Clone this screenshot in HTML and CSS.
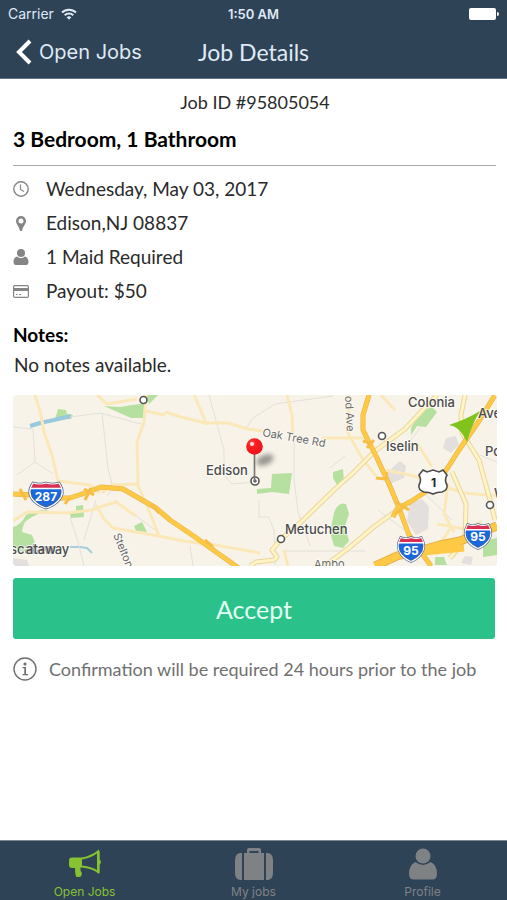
FILE: index.html
```html
<!DOCTYPE html>
<html lang="en">
<head>
<meta charset="utf-8">
<meta name="viewport" content="width=device-width, initial-scale=1">
<title>Job Details</title>
<link rel="stylesheet" href="styles.css">
</head>
<body>
<header class="top">
  <div class="status">
    <span class="carrier">Carrier
      <svg class="wifi" viewBox="0 0 16 12" aria-hidden="true"><g fill="none" stroke="currentColor" stroke-width="2"><path d="M1 4.500a10 10 0 0 1 14 0"/><path d="M3.700 7.300a6.200 6.200 0 0 1 8.600 0"/></g><path d="M5.700 9.300a3.300 3.300 0 0 1 4.600 0L8 11.800z" fill="currentColor"/></svg>
    </span>
    <span class="time">1:50 AM</span>
    <svg class="battery" viewBox="0 0 30 12" aria-hidden="true"><rect width="27" height="12" rx="2" fill="#fff"/><path d="M28 4q2 0 2 2t-2 2z" fill="#fff"/></svg>
  </div>
  <nav class="navbar">
    <a class="back" href="#"><svg viewBox="0 0 16 26" aria-hidden="true"><path d="M14 2 3 13l11 11" fill="none" stroke="currentColor" stroke-width="4"/></svg>Open Jobs</a>
    <h1>Job Details</h1>
  </nav>
</header>

<main class="content">
  <p class="job-id">Job ID #95805054</p>
  <h2 class="title">3 Bedroom, 1 Bathroom</h2>
  <ul class="facts">
    <li><svg viewBox="0 0 16 16" aria-hidden="true"><g fill="none" stroke="currentColor"><circle cx="8" cy="8" r="7.200" stroke-width="1.400"/><path d="M7.500 3.500V8.500L11 10.500" stroke-width="1.200"/></g></svg>Wednesday, May 03, 2017</li>
    <li><svg viewBox="0 0 16 16" aria-hidden="true"><path fill="currentColor" fill-rule="evenodd" d="M8 1a5 5 0 0 1 5 5c0 3-3 5-4 10H7C6 11 3 9 3 6a5 5 0 0 1 5-5zm0 2.500a2.500 2.500 0 1 0 0 5 2.500 2.500 0 0 0 0-5z"/></svg>Edison,NJ 08837</li>
    <li><svg viewBox="0 0 16 16" aria-hidden="true"><g fill="currentColor"><circle cx="8" cy="4" r="4"/><path d="M4 7.500q4 3.300 8 0 3.500 1 3.500 5.500 0 3-2.500 3H3q-2.500 0-2.500-3 0-4.500 3.500-5.500z"/></g></svg>1 Maid Required</li>
    <li><svg viewBox="0 0 16 16" aria-hidden="true"><rect x=".6" y="2.600" width="14.800" height="11.800" rx="1.200" fill="none" stroke="currentColor" stroke-width="1.200"/><path d="M1 5h14v3H1z" fill="currentColor"/><path d="M3 11.500h1.500M6 11.500h2" stroke="currentColor"/></svg>Payout: $50</li>
  </ul>
  <h3 class="notes-title">Notes:</h3>
  <p class="notes">No notes available.</p>

  <svg class="map" viewBox="13 395 484 171" role="img" aria-label="Map of Edison">
    <defs>
      <filter id="soft" x="-50%" y="-50%" width="200%" height="200%"><feGaussianBlur stdDeviation="2.500"/></filter>
      <clipPath id="shield-clip"><path d="M-13-12Q-6-10 0-12 6-10 13-12 20-2 12 6 7 11 0 13-7 11-12 6-20-2-13-12z"/></clipPath>
      <g id="shield">
        <path d="M-13-12Q-6-10 0-12 6-10 13-12 20-2 12 6 7 11 0 13-7 11-12 6-20-2-13-12z" fill="#1b68dc" stroke="#4a5f8a" stroke-width="2.600"/>
        <g clip-path="url(#shield-clip)"><path d="M-18-14h36v7h-36z" fill="#d92f50"/><path d="M-18-6.500h36" stroke="#fff" stroke-width="1.500"/></g>
        <path d="M-13-12Q-6-10 0-12 6-10 13-12 20-2 12 6 7 11 0 13-7 11-12 6-20-2-13-12z" fill="none" stroke="#fff" stroke-width="1.200"/>
      </g>
      <radialGradient id="ball" cx=".35" cy=".3" r=".8"><stop offset="0" stop-color="#ff5a50"/><stop offset=".3" stop-color="#fb1d20"/><stop offset="1" stop-color="#e9101a"/></radialGradient>
    </defs>
    <path fill="#f8f3e8" d="M13 395h484v171H13z"/>
    <g fill="#e3dfdc">
      <path d="M392 468l8-7 6 5-2 12-14 6-6-4zM410 503l12-4 7 8-1 22-12 6-9-14zM446 438l10-2 3 9-8 8-8-5zM13 558l14 2 2 6H13zM465 556l8 1-2 8-10-2z"/>
    </g>
    <g fill="#b5e0a0">
      <path d="M56 416l2-7 8 1 1 4 6 1-2 4-17 1zM104 406l16 1 25-4 1 15-15 0zM146 395h12l-9 9zM13 527q8-2 13-12 8-5 23-5-16 5-24 12-3 5-3 10l10 3q6 12 0 19l-10-2-9-5zM70 514l6-2 0-6 7-1 1 12-13 1zM134 526l8-4 5 10-11-1z"/>
      <path d="M257 489l14-1 1-14 20-1-3 21-17-2-15 2zM411 428l10-16 11-5 5 5-11 15-9-1-6 9zM333 472l10-3 1 13-7 3-4-7zM334 513q4-12 12-9l3 10-4 12 4 15-6 7-9-2-4-14zM435 557l9 0 3 8h-12zM483 541l14-3v17l-14 2z"/>
    </g>
    <path d="M30 426q12-4 24-6l17-4" fill="none" stroke="#98c9dc" stroke-width="4"/>
    <path d="M70 547h10l7 1 5 5" fill="none" stroke="#a3d0e0" stroke-width="2"/>
    <g fill="none" stroke="#e2e0da" stroke-width="1">
      <path d="M13 427l20 2 2 33-18 13M35 462l18 12M70 417l30-4 45 12M102 413l6 55 5 20M113 488l-6 8M70 517l8 25 6 24M96 500l-12 40M115 500l40 30"/>
      <path d="M209 395l15 55 0 25 8 9 22-2M245 430l8-12 22-14 58-8M294 440v40l4 32 12 34M259 500l0 17 10 0 5 14 1 34M190 546l3 20M285 551h80M420 428l-20 26M378 510l60 45M345 456l-15 12M424 493l28 27M480 455l17 7"/>
    </g>
    <g fill="none" stroke="#fbe8b8" stroke-width="3" stroke-linejoin="round">
      <path d="M35 395l6 20 3 17 8 23 6 26 32 4 10 8M97 395l10 9 30-5M146 395l-2 27-7 20 1 44 10 22 11 28M138 484l-26 1-10 8M165 415l-20-4M13 521l14-9 40 1 25-3 14-5 10-3 20 14M96 505l8 14 9 9 46 8 24 5 32 4 45 8"/>
      <path d="M165 412l16 5 24 6 23 0 20 6 15 2M322 438h44M194 395l13 30M287 395l5 20 1 20M284 550l4 16M349 395l-1 38 14 25 14 18M386 470l28 6 22 8 28 9 33 3M417 443l15 24M448 484l-4 30 10 18M395 410l-14-15M437 524l28 5 17-7M438 547l12-18"/>
    </g>
    <g fill="none" stroke-linejoin="round">
      <path d="M250 566l6-4 18-2 3-3-5-7 9-11 19-16 35-34 17-15 23-23 30-22 32-34M325 566l25-19 25-21 24-17M465 395l-4 20 1 18 17 27 11 40 5 20M452 472l14 32-1 37M450 558l12-14" stroke="#e8d5a0" stroke-width="5"/>
      <path d="M250 566l6-4 18-2 3-3-5-7 9-11 19-16 35-34 17-15 23-23 30-22 32-34M325 566l25-19 25-21 24-17M465 395l-4 20 1 18 17 27 11 40 5 20M452 472l14 32-1 37M450 558l12-14" stroke="#fff4c4" stroke-width="3"/>
      <path d="M13 494l20 1M60 498l10 0 18-6 13-5 22 2 33 19 14 12 25 17 45 32M369 395l-6 20v15l13 26 13 28 10 24 10 27 12 17 10 14M495 395l-16 26-20 29-14 22-15 17-20 13-13 7-4 8" stroke="#e5ad45" stroke-width="5"/>
      <path d="M375 566l22-10 28-7 15-4 20-4 37-15" stroke="#e5ad45" stroke-width="9"/>
      <path d="M13 494l20 1M60 498l10 0 18-6 13-5 22 2 33 19 14 12 25 17 45 32M369 395l-6 20v15l13 26 13 28 10 24 10 27 12 17 10 14M495 395l-16 26-20 29-14 22-15 17-20 13-13 7-4 8" stroke="#fec945" stroke-width="4"/>
      <path d="M375 566l22-10 28-7 15-4 20-4 37-15M424 552l40-4" stroke="#fec945" stroke-width="7"/>
      <path d="M20 489l6 11M65 504l5-7M84 489l10 6M91 488l-6 12M151 504l8 9M205 540l8 7M363 441l10 3M367 448l7-8M376 478l10 1 1-7M395 514l10-8M396 502l13 8" stroke="#f8bd45" stroke-width="3"/>
    </g>

    <g class="place">
      <text x="206" y="475">Edison</text><text x="285" y="534">Metuchen</text><text x="386" y="451">Iselin</text>
      <text x="408" y="407">Colonia</text><text x="478" y="418">Ave</text><text x="485" y="456">Po</text><text x="494" y="498">W</text>
      <text x="10" y="554">scataway</text><text x="26" y="554">ataw</text>
    </g>
    <g class="street">
      <text x="314" y="568">Ambo</text>
      <text transform="translate(262 436) rotate(10)">Oak Tree Rd</text>
      <text transform="translate(113 535) rotate(68)">Stelton</text>
      <text transform="translate(345 396) rotate(87)">od Ave</text>
    </g>
    <g fill="#fff" stroke="#555" stroke-width="1.600"><circle cx="143.500" cy="400" r="3.500"/><circle cx="382" cy="436" r="3.500"/><circle cx="281" cy="539" r="3.500"/><circle cx="490" cy="505" r="3.500"/><circle cx="255" cy="481" r="4"/></g>
    <circle cx="255" cy="481" r="1.800" fill="#666"/>
    <ellipse cx="265" cy="460" rx="9" ry="5" fill="#555" opacity=".6" transform="rotate(-22 265 460)" filter="url(#soft)"/>
    <path d="M254.500 453v28" stroke="#77716f" stroke-width="1.600"/>
    <circle cx="254.500" cy="446.500" r="8.300" fill="url(#ball)"/><circle cx="252" cy="444" r="2" fill="#fff" opacity=".85"/>
    <path d="M449 425q18-6 31-14-9 15-13 31-4-8-8-12-4-4-10-5z" fill="#7fc31c"/>

    <use href="#shield" x="46" y="495"/>
    <g transform="translate(411 549) scale(.8 .96)"><use href="#shield"/></g>
    <g transform="translate(478 536) scale(.8 .96)"><use href="#shield"/></g>
    <path d="M423 470l4 2 6-2 6 2 4-2 4 5q-3 5 0 10 1 5-5 7-5 0-9 2-4-2-9-2-6-2-5-7 3-5 0-10z" fill="#fff" stroke="#4b4b4b" stroke-width="1.600"/>
    <g class="route"><text x="46" y="501">287</text><text x="411" y="555">95</text><text x="478" y="541">95</text><text class="dark" x="433.500" y="487">1</text></g>
  </svg>

  <button class="accept" type="button">Accept</button>
  <p class="hint"><svg viewBox="0 0 24 24" aria-hidden="true"><circle cx="12" cy="12" r="11" fill="none" stroke="currentColor" stroke-width="1.400"/><circle cx="12" cy="7" r="1.600" fill="currentColor"/><path d="M9.500 10h3.500v7h2v1.200H9.500V17h1.800v-5.800H9.500z" fill="currentColor"/></svg>Confirmation will be required 24 hours prior to the job</p>
</main>

<nav class="tabs">
  <a class="tab active" href="#"><svg viewBox="0 0 34 32" aria-hidden="true"><path fill="currentColor" d="M4 9.500h10v10h-1.500v3q2 2 1 5-.5 1.500-3 1.500H8.500Q7 27 7 20H4q-3 0-3-3v-4.500q0-3 3-3z"/><path d="M14 10.500Q24 8.500 30 3.500v20.500Q24 19.500 14 18.500" fill="none" stroke="currentColor" stroke-width="2"/><path d="M30.500 3v22" stroke="currentColor" stroke-width="2.400"/><path d="M31 11q4 3 0 6z" fill="currentColor"/></svg>Open Jobs</a>
  <a class="tab" href="#"><svg viewBox="0 0 38 32" aria-hidden="true"><path fill="currentColor" d="M5 5h2v27H5q-5-1-5-7V12q0-6 5-7zM9 5h3V2q0-2 2-2h10q2 0 2 2v3h3v27H9zM14.500 5h9V3h-9zM31 5h2q5 1 5 7v13q0 6-5 7h-2z"/></svg>My jobs</a>
  <a class="tab" href="#"><svg viewBox="0 0 30 32" aria-hidden="true"><g fill="currentColor"><circle cx="15" cy="8" r="7.500"/><path d="M7.500 14q7.500 6 15 0Q29 16.500 29 26q0 5.500-5 5.500H6q-5 0-5-5.500 0-9.500 6.500-12z"/></g></svg>Profile</a>
</nav>
</body>
</html>
```
FILE: styles.css
```css
* { box-sizing: border-box; }
body {
  margin: 0;
  min-height: 100vh;
  display: flex;
  flex-direction: column;
  background: #fff;
  color: #2a2a2a;
  font: 18px/24px Lato, "Liberation Sans", sans-serif;
}
h1, h2, h3, p, ul { margin: 0; padding: 0; }
a { color: inherit; text-decoration: none; }

.top { background: #2f4357; color: #dfeaf6; border-bottom: 1px solid #64748a; }
.status {
  display: grid;
  grid-template-columns: 1fr auto 1fr;
  align-items: center;
  height: 28px;
  padding: 0 8px;
  font: 14px/16px Inter, sans-serif;
}
.carrier { display: flex; align-items: center; gap: 7px; }
.wifi { width: 16px; height: 12px; }
.time { font-size: 13px; font-weight: 600; }
.battery { width: 30px; height: 12px; justify-self: end; }
.navbar {
  display: grid;
  grid-template-columns: 1fr auto 1fr;
  align-items: center;
  height: 50px;
  padding: 0 16px 2px;
}
.back { display: flex; align-items: center; gap: 7px; font: 20px/26px Inter, sans-serif; white-space: nowrap; }
.back svg { width: 16px; height: 26px; color: #fff; }
.navbar h1 { font-size: 23px; font-weight: 400; line-height: 28px; }

.content { flex: 1; padding: 11px 10px 16px 13px; }
.job-id { text-align: center; }
.title {
  padding: 13px 0 14px;
  border-bottom: 1px solid #aaa;
  margin-right: 1px;
  font-size: 21px;
  line-height: 24px;
  color: #000;
}
.facts { list-style: none; padding-top: 6px; font-size: 19px; }
.facts li { display: flex; align-items: center; gap: 17px; height: 34px; }
.facts svg { width: 16px; height: 16px; color: #858585; }
.notes-title { margin-top: 15px; font-size: 19px; line-height: 24px; color: #000; }
.notes { padding: 6px 1px; font-size: 19px; }

.map { display: block; width: 100%; height: auto; margin-top: 12px; border-radius: 4px; }
.map text { font-family: Inter, sans-serif; }
.place text { font-size: 13px; font-weight: 500; fill: #4c4c4c; stroke: #fff; stroke-width: 2px; stroke-opacity: 0.6; paint-order: stroke; }
.street text { font-size: 11px; fill: #6a6a6a; stroke: #fff; stroke-width: 2px; stroke-opacity: 0.6; paint-order: stroke; }
.route text { font-size: 12px; font-weight: 700; fill: #fff; text-anchor: middle; }
.route .dark { fill: #222; }

.accept {
  display: block;
  width: calc(100% - 2px);
  height: 61px;
  margin-top: 12px;
  border: 0;
  border-radius: 3px;
  background: #2ac28a;
  color: #e4fff3;
  font: 25px/30px Lato, sans-serif;
}
.hint { display: flex; align-items: center; gap: 12px; margin-top: 18px; color: #707070; }
.hint svg { width: 24px; height: 24px; flex: none; }

.tabs {
  display: grid;
  grid-template-columns: repeat(3, 1fr);
  height: 60px;
  background: #2f4357;
  border-top: 1px solid #7d8894;
}
.tab {
  display: flex;
  flex-direction: column;
  align-items: center;
  gap: 4px;
  padding-top: 7px;
  color: #7f8284;
  font: 12px/16px Inter, sans-serif;
}
.tab svg { height: 32px; }
.tab.active { color: #86c232; }
```
